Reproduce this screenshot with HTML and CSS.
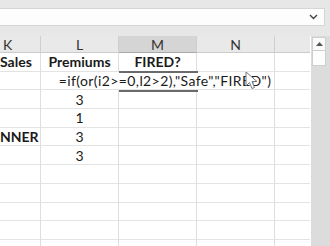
FILE: index.html
```html
<!DOCTYPE html>
<html lang="en">

<head>
    <meta charset="UTF-8">
    <meta name="viewport" content="width=device-width, initial-scale=1.0">
    <title>Sheet</title>
    <link rel="stylesheet" href="styles.css">
</head>

<body>
    <div class="formula-row">
        <div class="formula-bar">
            <svg class="chevron" width="9" height="6" viewBox="0 0 9 6">
                <path d="M1 1 L4.5 4.5 L8 1" fill="none" stroke="#444" stroke-width="1.4" />
            </svg>
        </div>
    </div>
    <main class="window">
        <div class="sheet">
            <div class="grid">
                <div class="hd">K</div>
                <div class="hd">L</div>
                <div class="hd hd-active">M</div>
                <div class="hd">N</div>
                <div class="hd hd-last"></div>

                <div class="cell bold left">Sales</div>
                <div class="cell bold">Premiums</div>
                <div class="cell bold">FIRED?</div>
                <div class="cell"></div>
                <div class="cell last"></div>

                <div class="cell"></div>
                <div class="cell edit">=if(or(i2&gt;=0,l2&gt;2),"Safe","FIRED")</div>
                <div class="cell last"></div>

                <div class="cell"></div>
                <div class="cell">3</div>
                <div class="cell"></div>
                <div class="cell"></div>
                <div class="cell last"></div>

                <div class="cell"></div>
                <div class="cell">1</div>
                <div class="cell"></div>
                <div class="cell"></div>
                <div class="cell last"></div>

                <div class="cell bold left">NNER</div>
                <div class="cell">3</div>
                <div class="cell"></div>
                <div class="cell"></div>
                <div class="cell last"></div>

                <div class="cell"></div>
                <div class="cell">3</div>
                <div class="cell"></div>
                <div class="cell"></div>
                <div class="cell last"></div>

                <div class="cell"></div>
                <div class="cell"></div>
                <div class="cell"></div>
                <div class="cell"></div>
                <div class="cell last"></div>

                <div class="cell"></div>
                <div class="cell"></div>
                <div class="cell"></div>
                <div class="cell"></div>
                <div class="cell last"></div>

                <div class="cell"></div>
                <div class="cell"></div>
                <div class="cell"></div>
                <div class="cell"></div>
                <div class="cell last"></div>

                <div class="cell"></div>
                <div class="cell"></div>
                <div class="cell"></div>
                <div class="cell"></div>
                <div class="cell last"></div>

                <div class="cell"></div>
                <div class="cell"></div>
                <div class="cell"></div>
                <div class="cell"></div>
                <div class="cell last"></div>
            </div>
            <!-- active cell outline -->
            <div class="selection"></div>
            <svg class="cursor" width="13" height="19" viewBox="0 0 13 19">
                <path d="M1 1 L1 15 L4.5 11.5 L7 17.5 L9.5 16.5 L7 10.5 L12 10.5 Z" fill="#fff" stroke="#777" stroke-width="1" />
            </svg>
        </div>
        <div class="scrollbar">
            <div class="scroll-btn">
                <svg width="7" height="4" viewBox="0 0 7 4">
                    <path d="M0 4 L3.5 0 L7 4 Z" fill="#555" />
                </svg>
            </div>
            <div class="scroll-thumb"></div>
        </div>
    </main>
</body>

</html>
```

FILE: styles.css
```css
* {
    margin: 0;
    padding: 0;
    box-sizing: border-box;
}

body {
    width: 330px;
    height: 246px;
    overflow: hidden;
    background-color: #e7e7e7;
    font-family: Lato, "Open Sans", sans-serif;
    color: #1a1a1a;
}

.formula-row {
    padding: 8px 5px 10px 0;
}

.formula-bar {
    height: 18px;
    background-color: #fdfdfd;
    border: 1px solid #d6d6d6;
    border-left: none;
    display: flex;
    justify-content: flex-end;
    align-items: center;
    padding-right: 6px;
}

.window {
    display: flex;
    height: 210px;
}

.sheet {
    position: relative;
    width: 311px;
    background-color: #fff;
    overflow: hidden;
}

.grid {
    display: grid;
    grid-template-columns: 42px 78px 78px 78px 35px;
    grid-template-rows: 17px repeat(11, 18.7px);
    margin-left: -1px;
}

.hd {
    background-color: #e9e9e9;
    border-right: 1px solid #cfcfcf;
    border-bottom: 1px solid #cbcbcb;
    display: flex;
    justify-content: center;
    align-items: center;
    font-size: 14px;
    color: #333;
}

.hd:first-child {
    justify-content: flex-start;
    padding-left: 4px;
}

.hd-active {
    background-color: #d5d5d5;
    border-bottom: 1px solid #a9a9a9;
}

.hd-last {
    border-right: none;
}

.cell {
    border-right: 1px solid #dedede;
    border-bottom: 1px solid #e3e3e3;
    display: flex;
    justify-content: center;
    align-items: center;
    font-size: 14px;
    white-space: nowrap;
}

.cell.last {
    border-right: none;
}

.bold {
    font-weight: bold;
}

.left {
    justify-content: flex-start;
    padding-left: 1px;
}

.edit {
    grid-column: 2 / 5;
    background-color: #fff;
    border-right: 1px solid #dedede;
    padding-left: 15px;
    font-size: 14px;
    letter-spacing: 0.4px;
    overflow: visible;
}

.selection {
    position: absolute;
    left: 119px;
    top: 35.4px;
    width: 79px;
    height: 20.4px;
    border-top: 2px solid #6a6a6a;
    border-bottom: 2px solid #6a6a6a;
}

.cursor {
    position: absolute;
    left: 245px;
    top: 35px;
}

.scrollbar {
    width: 19px;
    background-color: #dcdcdc;
    padding: 1px 4px 0 1px;
}

.scroll-btn {
    height: 14px;
    background-color: #fafafa;
    border: 1px solid #cfcfcf;
    display: flex;
    justify-content: center;
    align-items: center;
}

.scroll-thumb {
    height: 15px;
    background-color: #fdfdfd;
    border: 1px solid #cfcfcf;
    border-top: none;
}
```
